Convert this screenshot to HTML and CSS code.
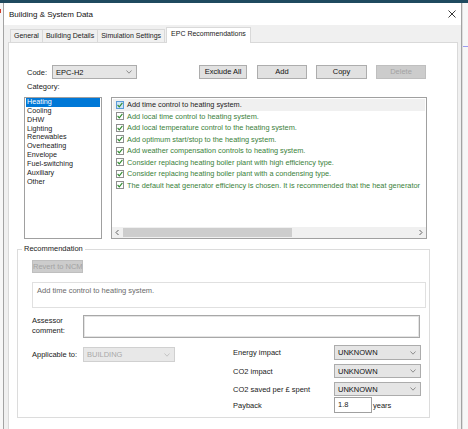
FILE: index.html
```html
<!DOCTYPE html>
<html lang="en">
<head>
    <meta charset="UTF-8">
    <title>Building &amp; System Data</title>
    <link rel="stylesheet" href="styles.css">
</head>
<body>
    <div class="screen">
        <div class="edge-left"><span class="mark"></span></div>
        <div class="window">
            <div class="titlebar">
                <span class="title">Building &amp; System Data</span>
                <svg class="close" width="8" height="8" viewBox="0 0 8 8">
                    <path d="M0.5 0.5 L7.5 7.5 M7.5 0.5 L0.5 7.5" stroke="#222" stroke-width="0.9" fill="none"/>
                </svg>
            </div>
            <div class="dialog-body">
                <div class="tabs">
                    <div class="tab">General</div>
                    <div class="tab">Building Details</div>
                    <div class="tab">Simulation Settings</div>
                    <div class="tab active">EPC Recommendations</div>
                </div>
                <div class="panel">
                    <div class="code-row">
                        <span class="code-label">Code:</span>
                        <div class="select code-select">
                            <span>EPC-H2</span>
                            <svg class="chevron" width="6" height="4" viewBox="0 0 6 4"><path d="M0.5 0.5 L3 3.2 L5.5 0.5" stroke="#777" stroke-width="0.8" fill="none"/></svg>
                        </div>
                        <div class="button exclude">Exclude All</div>
                        <div class="button add">Add</div>
                        <div class="button copy">Copy</div>
                        <div class="button delete disabled">Delete</div>
                    </div>
                    <div class="cat-label">Category:</div>
                    <div class="lists">
                        <ul class="category-list">
                            <li class="selected">Heating</li>
                            <li>Cooling</li>
                            <li>DHW</li>
                            <li>Lighting</li>
                            <li>Renewables</li>
                            <li>Overheating</li>
                            <li>Envelope</li>
                            <li>Fuel-switching</li>
                            <li>Auxiliary</li>
                            <li>Other</li>
                        </ul>
                        <div class="check-list">
                            <div class="check-rows" id="checkRows"></div>
                            <div class="hscroll">
                                <svg class="arrow" width="11" height="11" viewBox="0 0 11 11"><path d="M6.5 3 L4 5.5 L6.5 8" stroke="#606060" stroke-width="1" fill="none"/></svg>
                                <div class="track"><div class="thumb"></div></div>
                                <svg class="arrow" width="11" height="11" viewBox="0 0 11 11"><path d="M4.5 3 L7 5.5 L4.5 8" stroke="#606060" stroke-width="1" fill="none"/></svg>
                            </div>
                        </div>
                    </div>

                    <fieldset class="recommendation">
                        <legend>Recommendation</legend>
                        <div class="button revert disabled">Revert to NCM</div>
                        <div class="description">Add time control to heating system.</div>
                        <div class="assessor-row">
                            <div class="field-label two-line">Assessor<br>comment:</div>
                            <div class="assessor-input"></div>
                        </div>
                        <div class="bottom-area">
                            <div class="applicable">
                                <div class="field-label">Applicable to:</div>
                                <div class="select building-select disabled">
                                    <span>BUILDING</span>
                                    <svg class="chevron" width="6" height="4" viewBox="0 0 6 4"><path d="M0.5 0.5 L3 3.2 L5.5 0.5" stroke="#bbb" stroke-width="0.8" fill="none"/></svg>
                                </div>
                            </div>
                            <div class="impacts">
                                <div class="impact-label">Energy impact</div>
                                <div class="select impact-select first">
                                    <span>UNKNOWN</span>
                                    <svg class="chevron" width="6" height="4" viewBox="0 0 6 4"><path d="M0.5 0.5 L3 3.2 L5.5 0.5" stroke="#777" stroke-width="0.8" fill="none"/></svg>
                                </div>
                                <div class="impact-label">CO2 impact</div>
                                <div class="select impact-select">
                                    <span>UNKNOWN</span>
                                    <svg class="chevron" width="6" height="4" viewBox="0 0 6 4"><path d="M0.5 0.5 L3 3.2 L5.5 0.5" stroke="#777" stroke-width="0.8" fill="none"/></svg>
                                </div>
                                <div class="impact-label">CO2 saved per &pound; spent</div>
                                <div class="select impact-select">
                                    <span>UNKNOWN</span>
                                    <svg class="chevron" width="6" height="4" viewBox="0 0 6 4"><path d="M0.5 0.5 L3 3.2 L5.5 0.5" stroke="#777" stroke-width="0.8" fill="none"/></svg>
                                </div>
                                <div class="impact-label payback-label">Payback</div>
                                <div class="payback">
                                    <div class="payback-input">1.8</div>
                                    <span class="years">years</span>
                                </div>
                            </div>
                        </div>
                    </fieldset>
                </div>
            </div>
        </div>
        <div class="edge-right"><span class="line"></span></div>
    </div>

    <script>
        // Recommendation rows for the Heating category
        const recommendations = [
            'Add time control to heating system.',
            'Add local time control to heating system.',
            'Add local temperature control to the heating system.',
            'Add optimum start/stop to the heating system.',
            'Add weather compensation controls to heating system.',
            'Consider replacing heating boiler plant with high efficiency type.',
            'Consider replacing heating boiler plant with a condensing type.',
            'The default heat generator efficiency is chosen. It is recommended that the heat generator'
        ];
        const checkRows = document.getElementById('checkRows');
        recommendations.forEach((text, i) => {
            const row = document.createElement('div');
            row.className = i === 0 ? 'check-row current' : 'check-row';
            row.innerHTML = '<span class="checkbox"><svg width="6" height="6" viewBox="0 0 6 6"><path d="M0.6 3 L2.3 4.8 L5.4 0.8" stroke="#2f8a2f" stroke-width="1.1" fill="none"/></svg></span>';
            const label = document.createElement('span');
            label.className = 'check-text';
            label.textContent = text;
            row.appendChild(label);
            checkRows.appendChild(row);
        });
    </script>
</body>
</html>
```

FILE: styles.css
```css
body {
    margin: 0;
    font-family: 'Liberation Sans', Arial, sans-serif;
    font-size: 7.5px;
    color: #1a1a1a;
    background-color: #fafafa;
}
.screen {
    display: flex;
    width: 468px;
    height: 429px;
    border-top: 3px solid #1f4a5f;
    box-sizing: border-box;
    overflow: hidden;
}
.edge-left {
    width: 3px;
    flex-shrink: 0;
    background-color: #f7f7f7;
}
.edge-left .mark {
    display: block;
    width: 1px;
    height: 4px;
    margin-top: 6px;
    background-color: #d23c2a;
}
.edge-right {
    flex: 1;
    background-color: #f7f7f7;
    border-left: 1px solid #dedede;
}
.edge-right .line {
    display: block;
    height: 1px;
    margin-top: 43px;
    background-color: #9b9bf0;
}
.window {
    width: 459px;
    flex-shrink: 0;
    border-left: 1px solid #a3a3a3;
    border-right: 1px solid #a3a3a3;
    box-sizing: border-box;
    overflow: hidden;
}
.titlebar {
    height: 22px;
    background-color: #fff;
    display: flex;
    align-items: center;
    justify-content: space-between;
    padding: 0 5px 0 5px;
    box-sizing: border-box;
}
.title {
    font-size: 8px;
    color: #111;
}
.dialog-body {
    height: 420px;
    background-color: #f0f0f0;
    padding: 2px 3px 0 4px;
}
.tabs {
    display: flex;
    align-items: flex-end;
    height: 15px;
    padding-left: 2px;
    font-size: 7px;
}
.tab {
    height: 13px;
    line-height: 12px;
    padding: 0 3px;
    border: 1px solid #d9d9d9;
    border-bottom: none;
    margin-right: -1px;
    box-sizing: border-box;
    background-color: #f0f0f0;
    color: #1a1a1a;
    white-space: nowrap;
}
.tab.active {
    height: 16px;
    line-height: 12px;
    margin-bottom: -1px;
    margin-left: 2px;
    padding: 0 4px;
    background-color: #fff;
    position: relative;
    z-index: 1;
}
.panel {
    height: 400px;
    background-color: #fff;
    border: 1px solid #d9d9d9;
    box-sizing: border-box;
}

/* top row */
.code-row {
    display: flex;
    align-items: center;
    height: 14px;
    margin: 22px 0 0 15px;
}
.code-label {
    width: 25px;
    margin-left: 3px;
}
.select {
    display: flex;
    align-items: center;
    justify-content: space-between;
    height: 14px;
    padding: 0 4px 0 3px;
    background-color: #e5e5e5;
    border: 1px solid #acacac;
    box-sizing: border-box;
    color: #111;
}
.code-select {
    width: 85px;
}
.button {
    height: 14px;
    line-height: 12px;
    text-align: center;
    white-space: nowrap;
    background-color: #e1e1e1;
    border: 1px solid #adadad;
    box-sizing: border-box;
    color: #111;
}
.button.disabled {
    background-color: #cccccc;
    border-color: #bfbfbf;
    color: #a3a3a3;
}
.exclude { width: 48px; margin-left: 62px; }
.add { width: 50px; margin-left: 10px; }
.copy { width: 51px; margin-left: 9px; }
.delete { width: 50px; margin-left: 9px; }
.cat-label {
    height: 10px;
    line-height: 10px;
    margin: 3px 0 0 18px;
}

/* lists */
.lists {
    display: grid;
    grid-template-columns: 78px 316px;
    column-gap: 9px;
    margin: 5px 0 0 15px;
}
.category-list {
    list-style: none;
    margin: 0;
    padding: 0 1px;
    height: 142px;
    border: 1px solid #a0a0a0;
    box-sizing: border-box;
    font-size: 7.2px;
}
.category-list li {
    height: 8.85px;
    line-height: 8.85px;
    padding-left: 1px;
}
.category-list li.selected {
    background-color: #0078d7;
    color: #fff;
}
.check-list {
    min-width: 0;
    height: 142px;
    border: 1px solid #a0a0a0;
    box-sizing: border-box;
    display: flex;
    flex-direction: column;
    justify-content: space-between;
    overflow: hidden;
}
.check-rows {
    padding: 1px 1px 0 1px;
    overflow: hidden;
}
.check-row {
    display: flex;
    align-items: center;
    height: 11.5px;
    white-space: nowrap;
    font-size: 7.35px;
    color: #3a7f3a;
}
.check-row.current {
    background-color: #f0f0f0;
    color: #222;
}
.checkbox {
    display: flex;
    align-items: center;
    justify-content: center;
    width: 8px;
    height: 8px;
    margin: 0 3px 0 3px;
    flex-shrink: 0;
    border: 1px solid #8f8f8f;
    box-sizing: border-box;
    background-color: #fff;
}
.check-row.current .checkbox {
    border-color: #5a9bd8;
    background-color: #cce4f7;
}
.hscroll {
    display: flex;
    align-items: center;
    height: 11px;
    flex-shrink: 0;
    background-color: #f0f0f0;
}
.hscroll .arrow {
    flex-shrink: 0;
}
.track {
    flex: 1;
    height: 9px;
}
.thumb {
    width: 169px;
    height: 9px;
    background-color: #cdcdcd;
}

/* recommendation group */
.recommendation {
    width: 413px;
    margin: 5px 0 0 8px;
    padding: 0 0 4px 0;
    border: 1px solid #dcdcdc;
    box-sizing: border-box;
    min-width: 0;
}
.recommendation legend {
    margin-left: 4px;
    padding: 0 2px;
    height: 10px;
    line-height: 10px;
}
.revert {
    width: 51px;
    height: 13px;
    line-height: 11px;
    margin: 6px 0 0 14px;
}
.description {
    width: 394px;
    height: 26px;
    margin: 9px 0 0 14px;
    padding: 3px 4px;
    line-height: 10px;
    border: 1px solid #e0e0e0;
    box-sizing: border-box;
    color: #6b6b6b;
}
.assessor-row {
    display: flex;
    margin: 7px 0 0 14px;
}
.field-label {
    width: 51px;
    flex-shrink: 0;
}
.two-line {
    line-height: 10px;
    padding-top: 1px;
}
.assessor-input {
    width: 337px;
    height: 23px;
    border: 1px solid #a8a8a8;
    box-shadow: inset 0 0 0 1px #e4e4e4;
    box-sizing: border-box;
}
.bottom-area {
    display: flex;
    align-items: flex-start;
    margin: 7px 0 0 14px;
}
.applicable {
    display: flex;
    align-items: center;
    margin-top: 2px;
    line-height: 15px;
}
.building-select {
    width: 92px;
    height: 15px;
    background-color: #e8e8e8;
    border-color: #d0d0d0;
    color: #a8a8a8;
}
.impacts {
    display: grid;
    grid-template-columns: 101px 87px;
    align-items: center;
    margin-left: 58px;
}
.impact-select {
    width: 87px;
    height: 14px;
    margin-top: 4px;
}
.impact-select.first {
    height: 15px;
    margin-top: 0;
}
.impacts .impact-label:nth-child(3),
.impacts .impact-label:nth-child(5) {
    margin-top: 4px;
}
.payback-label {
    margin-top: 2px;
}
.payback {
    display: flex;
    align-items: center;
    margin-top: 1px;
}
.payback-input {
    width: 38px;
    height: 16px;
    line-height: 14px;
    padding-left: 3px;
    border: 1px solid #a0a0a0;
    box-sizing: border-box;
    background-color: #fff;
}
.years {
    margin-left: 1px;
}
```
